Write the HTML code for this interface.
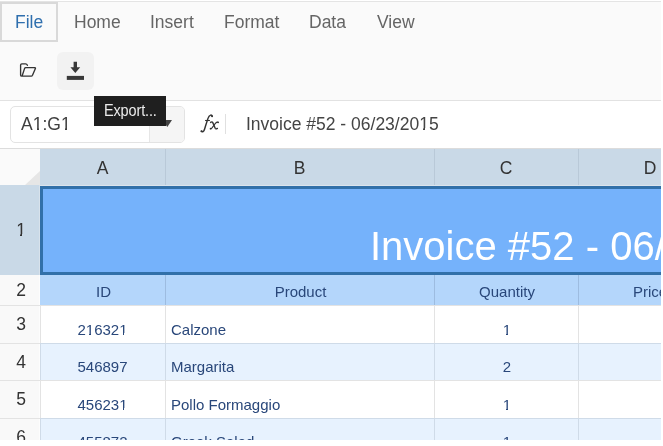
<!DOCTYPE html>
<html><head><meta charset="utf-8">
<style>
*{margin:0;padding:0;box-sizing:border-box}
html,body{width:663px;height:446px;overflow:hidden;background:#fff;font-family:"Liberation Sans",sans-serif}
.a{position:absolute;white-space:nowrap}
.t{will-change:transform}
#wrap{position:absolute;left:0;top:0;width:661px;height:440px;overflow:hidden;background:#fff}
.o{position:relative;--bg:#fff}
.o::before,.o::after{content:'';position:absolute;bottom:0.195em;height:0.17em;background:var(--bg)}
.o::before{left:0;width:0.235em}
.o::after{left:0.35em;width:0.25em}
</style></head><body>
<div id="wrap">
<div class="a" style="left:0px;top:1px;width:661px;height:100px;background:#fafafa;border-top:1px solid #e4e4e4;border-bottom:1px solid #e2e2e2"></div>
<div class="a" style="left:0px;top:2px;width:58px;height:40px;background:transparent;border:2px solid #d9d9d9"></div>
<div class="a t" style="left:15.0px;top:11.03px;font-size:17.5px;line-height:23px;color:#2f6fae;">File</div>
<div class="a t" style="left:74.2px;top:11.03px;font-size:17.5px;line-height:23px;color:#656565;">Home</div>
<div class="a t" style="left:150.2px;top:11.03px;font-size:17.5px;line-height:23px;color:#656565;">Insert</div>
<div class="a t" style="left:224.0px;top:11.03px;font-size:17.5px;line-height:23px;color:#656565;">Format</div>
<div class="a t" style="left:309.1px;top:11.03px;font-size:17.5px;line-height:23px;color:#656565;">Data</div>
<div class="a t" style="left:377.0px;top:11.03px;font-size:17.5px;line-height:23px;color:#656565;">View</div>
<svg class="a" style="left:14px;top:56px" width="28" height="28" viewBox="0 0 28 28">
<path d="M13.4 9.3 Q12.8 7.8 11.6 7.8 H7.9 Q6.6 7.8 6.6 9.1 V18.9 Q6.6 20.1 7.8 20.1 H17.3 Q18.1 20.1 18.5 19.3 L21.4 12.6 Q21.7 11.6 20.8 11.6 H11.7 Q10.9 11.6 10.6 12.4 L8.1 20" fill="none" stroke="#333" stroke-width="1.35" stroke-linejoin="round" stroke-linecap="round"/>
</svg>
<div class="a" style="left:57px;top:52px;width:37px;height:38px;background:#f2f2f2;border-radius:6px"></div>
<svg class="a" style="left:66px;top:61px" width="19" height="20" viewBox="0 0 19 20">
<path d="M7.6 0.8 H11 V6.2 H14.2 L9.3 12.1 L4.4 6.2 H7.6 Z" fill="#383838"/>
<rect x="0.8" y="14.9" width="17.2" height="4" fill="#383838"/>
</svg>
<div class="a" style="left:0px;top:101px;width:661px;height:48px;background:#fff;border-bottom:1px solid #dcdcdc"></div>
<div class="a" style="left:10px;top:106px;width:175px;height:37px;background:#fff;border:1px solid #e3e3e3;border-radius:5px;overflow:hidden"></div>
<div class="a" style="left:149px;top:107px;width:35px;height:35px;background:#f5f5f5;border-left:1px solid #e6e6e6;border-radius:0 4px 4px 0"></div>
<div class="a t" style="left:20.6px;top:113.43px;font-size:17.5px;line-height:23px;color:#404040;">A<span class="o" style="--bg:#fff">1</span>:G<span class="o" style="--bg:#fff">1</span></div>
<svg class="a" style="left:160px;top:116px" width="16" height="14"><path d="M2.6 4 L12 4 L7.3 11.1 Z" fill="#444"/></svg>
<svg class="a" style="left:196px;top:110px" width="30" height="26" viewBox="0 0 30 26">
<path d="M5.5 21.3 Q6.5 22.3 7.7 21 Q8.5 20 9.6 15.8 L11.9 8.6 Q12.9 5.5 14.6 5.1 Q15.9 4.9 16.1 6.2" fill="none" stroke="#333" stroke-width="1.45" stroke-linecap="round"/>
<circle cx="5.5" cy="21.2" r="1.05" fill="#333"/><circle cx="16.1" cy="6.3" r="0.95" fill="#333"/>
<path d="M9.1 10.5 H13.9" stroke="#333" stroke-width="1.1"/>
<path d="M14.6 12.4 Q16 11.2 16.8 12.6 L19.2 18.2 Q19.8 19.4 21.4 18.4" fill="none" stroke="#333" stroke-width="1.4" stroke-linecap="round"/>
<path d="M22 12.2 Q20.6 12 19.4 13.4 L16.2 17.6 Q15.2 19 14.6 18.6" fill="none" stroke="#333" stroke-width="1.1" stroke-linecap="round"/>
<circle cx="22.1" cy="12.3" r="0.9" fill="#333"/><circle cx="14.6" cy="18.7" r="0.9" fill="#333"/>
</svg>
<div class="a" style="left:225px;top:114px;width:1px;height:20px;background:#e0e0e0;"></div>
<div class="a t" style="left:246.4px;top:113.23px;font-size:17.5px;line-height:23px;color:#444;">Invoice #52 - 06/23/20<span class="o" style="--bg:#fff">1</span>5</div>
<div class="a" style="left:0px;top:149px;width:40px;height:36px;background:#fafafa;"></div>
<svg class="a" style="left:25px;top:171px" width="15" height="14"><path d="M15 0 L15 14 L0 14 Z" fill="#e6e6e6"/></svg>
<div class="a" style="left:40px;top:149px;width:125px;height:36px;background:#c9d9e7;"></div>
<div class="a t" style="left:40.3px;top:156.63px;font-size:17.5px;line-height:23px;color:#333;width:125px;text-align:center;">A</div>
<div class="a" style="left:165px;top:149px;width:269px;height:36px;background:#c9d9e7;border-left:1px solid #b9c9d8"></div>
<div class="a t" style="left:165.3px;top:156.63px;font-size:17.5px;line-height:23px;color:#333;width:269px;text-align:center;">B</div>
<div class="a" style="left:434px;top:149px;width:144px;height:36px;background:#c9d9e7;border-left:1px solid #b9c9d8"></div>
<div class="a t" style="left:434.3px;top:156.63px;font-size:17.5px;line-height:23px;color:#333;width:144px;text-align:center;">C</div>
<div class="a" style="left:578px;top:149px;width:144px;height:36px;background:#c9d9e7;border-left:1px solid #b9c9d8"></div>
<div class="a t" style="left:578.3px;top:156.63px;font-size:17.5px;line-height:23px;color:#333;width:144px;text-align:center;">D</div>
<div class="a" style="left:40px;top:185px;width:621px;height:1px;background:#dbe4ec;"></div>
<div class="a" style="left:0px;top:185px;width:40px;height:90px;background:#c9d9e7;"></div>
<div class="a" style="left:39px;top:185px;width:1px;height:90px;background:#d8e2eb;"></div>
<div class="a t" style="left:0.6px;top:218.93px;font-size:17.5px;line-height:23px;color:#333;width:40px;text-align:center;"><span class="o" style="--bg:#c9d9e7">1</span></div>
<div class="a" style="left:0px;top:275px;width:40px;height:30px;background:#f9f9f9;"></div>
<div class="a t" style="left:0.5px;top:278.73px;font-size:17.5px;line-height:23px;color:#333;width:40px;text-align:center;">2</div>
<div class="a" style="left:0px;top:306px;width:40px;height:37px;background:#f9f9f9;"></div>
<div class="a t" style="left:0.5px;top:312.63px;font-size:17.5px;line-height:23px;color:#333;width:40px;text-align:center;">3</div>
<div class="a" style="left:0px;top:344px;width:40px;height:36px;background:#f9f9f9;"></div>
<div class="a t" style="left:0.5px;top:350.63px;font-size:17.5px;line-height:23px;color:#333;width:40px;text-align:center;">4</div>
<div class="a" style="left:0px;top:381px;width:40px;height:37px;background:#f9f9f9;"></div>
<div class="a t" style="left:0.5px;top:387.83px;font-size:17.5px;line-height:23px;color:#333;width:40px;text-align:center;">5</div>
<div class="a" style="left:0px;top:419px;width:40px;height:37px;background:#f9f9f9;"></div>
<div class="a t" style="left:0.5px;top:425.63px;font-size:17.5px;line-height:23px;color:#333;width:40px;text-align:center;">6</div>
<div class="a" style="left:39px;top:275px;width:1px;height:170px;background:#fdfdfd;"></div>
<div class="a" style="left:0px;top:305px;width:40px;height:1px;background:#e3e3e3;"></div>
<div class="a" style="left:0px;top:343px;width:40px;height:1px;background:#e3e3e3;"></div>
<div class="a" style="left:0px;top:380px;width:40px;height:1px;background:#e3e3e3;"></div>
<div class="a" style="left:0px;top:418px;width:40px;height:1px;background:#e3e3e3;"></div>
<div class="a" style="left:40px;top:186px;width:621px;height:89px;background:#75b2fb;border:3px solid #3170a9;border-right:none"></div>
<div class="a t" style="left:369.7px;top:220.33px;font-size:40px;line-height:52px;color:#fff;">Invoice #52 - 06/23/2015</div>
<div class="a" style="left:40px;top:275px;width:621px;height:30px;background:#b4d6fb;"></div>
<div class="a" style="left:165px;top:275px;width:1px;height:30px;background:#9dbce0;"></div>
<div class="a" style="left:434px;top:275px;width:1px;height:30px;background:#9dbce0;"></div>
<div class="a" style="left:578px;top:275px;width:1px;height:30px;background:#9dbce0;"></div>
<div class="a" style="left:40px;top:305px;width:621px;height:1px;background:#e3e3e3;"></div>
<div class="a t" style="left:40.5px;top:282.10px;font-size:15px;line-height:20px;color:#29477a;width:125px;text-align:center;">ID</div>
<div class="a t" style="left:165.5px;top:282.10px;font-size:15px;line-height:20px;color:#29477a;width:269px;text-align:center;">Product</div>
<div class="a t" style="left:434.5px;top:282.10px;font-size:15px;line-height:20px;color:#29477a;width:144px;text-align:center;">Quantity</div>
<div class="a t" style="left:577.5px;top:282.10px;font-size:15px;line-height:20px;color:#29477a;width:144px;text-align:center;">Price</div>
<div class="a" style="left:40px;top:306px;width:621px;height:37px;background:#fff;"></div>
<div class="a" style="left:40px;top:306px;width:1px;height:37px;background:#e3e3e3;"></div>
<div class="a" style="left:165px;top:306px;width:1px;height:37px;background:#e3e3e3;"></div>
<div class="a" style="left:434px;top:306px;width:1px;height:37px;background:#e3e3e3;"></div>
<div class="a" style="left:578px;top:306px;width:1px;height:37px;background:#e3e3e3;"></div>
<div class="a t" style="left:40px;top:320.00px;font-size:15px;line-height:20px;color:#29477a;width:125px;text-align:center;">2<span class="o" style="--bg:#fff">1</span>632<span class="o" style="--bg:#fff">1</span></div>
<div class="a t" style="left:171.3px;top:320.00px;font-size:15px;line-height:20px;color:#29477a;">Calzone</div>
<div class="a t" style="left:434.7px;top:320.00px;font-size:15px;line-height:20px;color:#29477a;width:144px;text-align:center;"><span class="o" style="--bg:#fff">1</span></div>
<div class="a" style="left:40px;top:344px;width:621px;height:36px;background:#e7f2fe;"></div>
<div class="a" style="left:40px;top:343px;width:621px;height:1px;background:#cfdbe8;"></div>
<div class="a" style="left:40px;top:344px;width:1px;height:36px;background:#cfdbe8;"></div>
<div class="a" style="left:165px;top:344px;width:1px;height:36px;background:#cfdbe8;"></div>
<div class="a" style="left:434px;top:344px;width:1px;height:36px;background:#cfdbe8;"></div>
<div class="a" style="left:578px;top:344px;width:1px;height:36px;background:#cfdbe8;"></div>
<div class="a t" style="left:40px;top:357.40px;font-size:15px;line-height:20px;color:#29477a;width:125px;text-align:center;">546897</div>
<div class="a t" style="left:171.3px;top:357.40px;font-size:15px;line-height:20px;color:#29477a;">Margarita</div>
<div class="a t" style="left:434.7px;top:357.40px;font-size:15px;line-height:20px;color:#29477a;width:144px;text-align:center;">2</div>
<div class="a" style="left:40px;top:381px;width:621px;height:37px;background:#fff;"></div>
<div class="a" style="left:40px;top:381px;width:1px;height:37px;background:#e3e3e3;"></div>
<div class="a" style="left:165px;top:381px;width:1px;height:37px;background:#e3e3e3;"></div>
<div class="a" style="left:434px;top:381px;width:1px;height:37px;background:#e3e3e3;"></div>
<div class="a" style="left:578px;top:381px;width:1px;height:37px;background:#e3e3e3;"></div>
<div class="a t" style="left:40px;top:395.00px;font-size:15px;line-height:20px;color:#29477a;width:125px;text-align:center;">45623<span class="o" style="--bg:#fff">1</span></div>
<div class="a t" style="left:171.3px;top:395.00px;font-size:15px;line-height:20px;color:#29477a;">Pollo Formaggio</div>
<div class="a t" style="left:434.7px;top:395.00px;font-size:15px;line-height:20px;color:#29477a;width:144px;text-align:center;"><span class="o" style="--bg:#fff">1</span></div>
<div class="a" style="left:40px;top:419px;width:621px;height:30px;background:#e7f2fe;"></div>
<div class="a" style="left:40px;top:418px;width:621px;height:1px;background:#cfdbe8;"></div>
<div class="a" style="left:40px;top:419px;width:1px;height:30px;background:#cfdbe8;"></div>
<div class="a" style="left:165px;top:419px;width:1px;height:30px;background:#cfdbe8;"></div>
<div class="a" style="left:434px;top:419px;width:1px;height:30px;background:#cfdbe8;"></div>
<div class="a" style="left:578px;top:419px;width:1px;height:30px;background:#cfdbe8;"></div>
<div class="a t" style="left:40px;top:431.60px;font-size:15px;line-height:20px;color:#29477a;width:125px;text-align:center;">455872</div>
<div class="a t" style="left:171.3px;top:431.60px;font-size:15px;line-height:20px;color:#29477a;">Greek Salad</div>
<div class="a t" style="left:434.7px;top:431.60px;font-size:15px;line-height:20px;color:#29477a;width:144px;text-align:center;"><span class="o" style="--bg:#e7f2fe">1</span></div>
<div class="a" style="left:40px;top:380px;width:621px;height:1px;background:#e3e3e3;"></div>
<div class="a" style="left:94px;top:96px;width:72px;height:30px;background:#1f1f1f;"></div>
<div class="a t" style="left:103.5px;top:101.77px;font-size:14.5px;line-height:19px;color:#ececec;letter-spacing:-0.15px;transform:scaleY(1.08);transform-origin:0 14.5px;">Export...</div>
</div>
</body></html>
